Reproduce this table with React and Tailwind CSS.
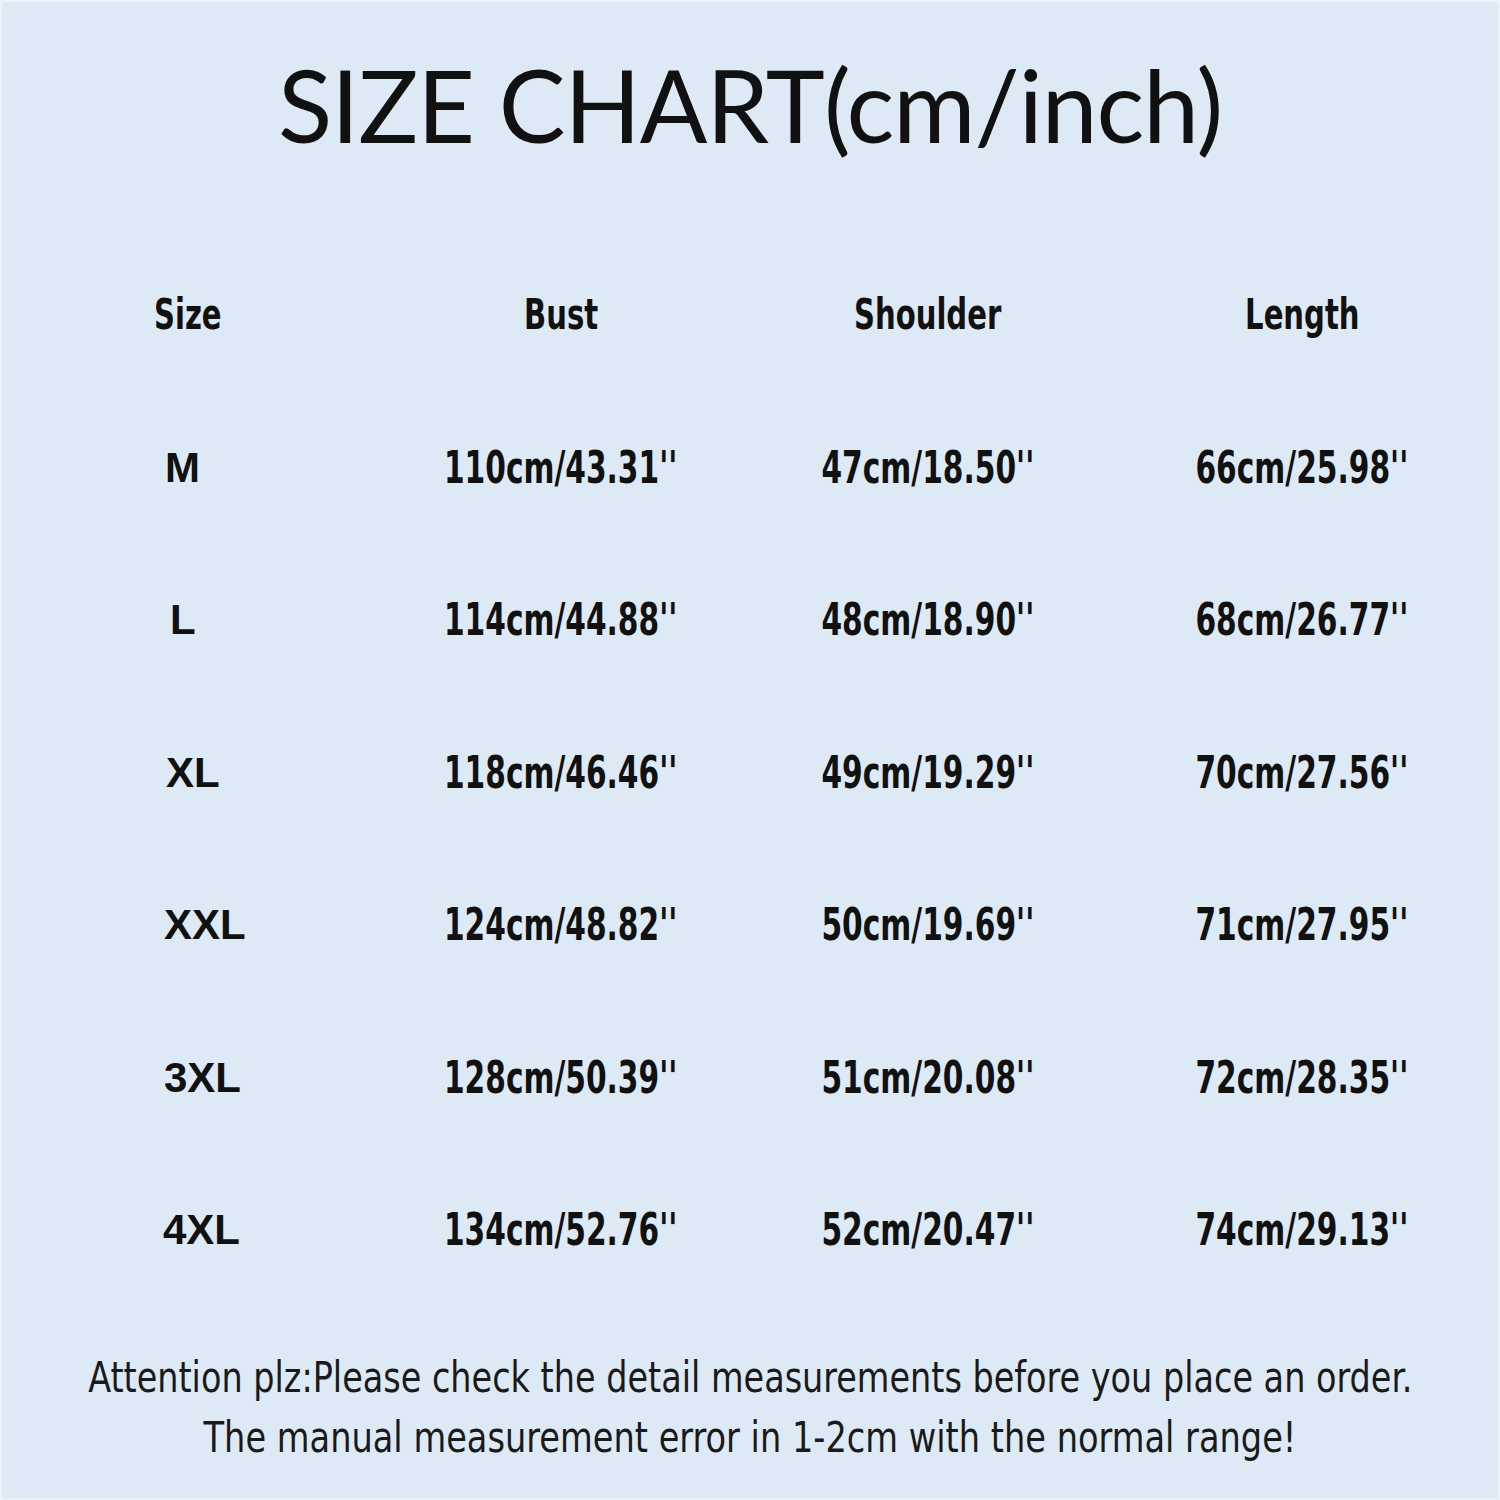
export default function App() {
  const rows = [
    { s: "M", pl: "pl-[163px]", b: "110cm/43.31''", sh: "47cm/18.50''", l: "66cm/25.98''" },
    { s: "L", pl: "pl-[168px]", b: "114cm/44.88''", sh: "48cm/18.90''", l: "68cm/26.77''" },
    { s: "XL", pl: "pl-[164px]", b: "118cm/46.46''", sh: "49cm/19.29''", l: "70cm/27.56''" },
    { s: "XXL", pl: "pl-[162px]", b: "124cm/48.82''", sh: "50cm/19.69''", l: "71cm/27.95''" },
    { s: "3XL", pl: "pl-[162px]", b: "128cm/50.39''", sh: "51cm/20.08''", l: "72cm/28.35''" },
    { s: "4XL", pl: "pl-[161px]", b: "134cm/52.76''", sh: "52cm/20.47''", l: "74cm/29.13''" },
  ];
  const cond = "font-['DejaVu_Sans_Condensed','DejaVu_Sans',sans-serif]";
  const head = `inline-block ${cond} font-bold text-[42px] leading-none scale-x-[0.77]`;
  const val = `inline-block ${cond} font-bold text-[44px] leading-none scale-x-[0.75]`;
  return (
    <div className="w-[1500px] h-[1500px] bg-[#dde9f5] border-2 border-[#eaf2fa] text-[#111] flex flex-col">
      <div className="pt-[52px] text-center font-['Lato',sans-serif] text-[100px] leading-none tracking-[-1px]">
        SIZE CHART(cm/inch)
      </div>
      <div className="mt-[85px] grid grid-cols-[378px_362px_372px_376px] auto-rows-[152.5px] items-center">
        <div className="pl-[152px]">
          <span className={`${head} origin-left`}>Size</span>
        </div>
        <div className="text-center"><span className={head}>Bust</span></div>
        <div className="text-center"><span className={head}>Shoulder</span></div>
        <div className="text-center"><span className={head}>Length</span></div>
        {rows.map((r) => (
          <div key={r.s} className="contents">
            <div className={`${r.pl} font-['Liberation_Sans',Arial,sans-serif] font-bold text-[42px] leading-none`}>{r.s}</div>
            <div className="text-center"><span className={val}>{r.b}</span></div>
            <div className="text-center"><span className={val}>{r.sh}</span></div>
            <div className="text-center"><span className={val}>{r.l}</span></div>
          </div>
        ))}
      </div>
      <div className={`mt-[41px] text-center ${cond} text-[42px] leading-[60px] text-[#1a1a1a]`}>
        <div><span className="inline-block scale-x-[0.886] whitespace-nowrap">Attention plz:Please check the detail measurements before you place an order.</span></div>
        <div><span className="inline-block scale-x-[0.89] whitespace-nowrap">The manual measurement error in 1-2cm with the normal range!</span></div>
      </div>
    </div>
  );
}
